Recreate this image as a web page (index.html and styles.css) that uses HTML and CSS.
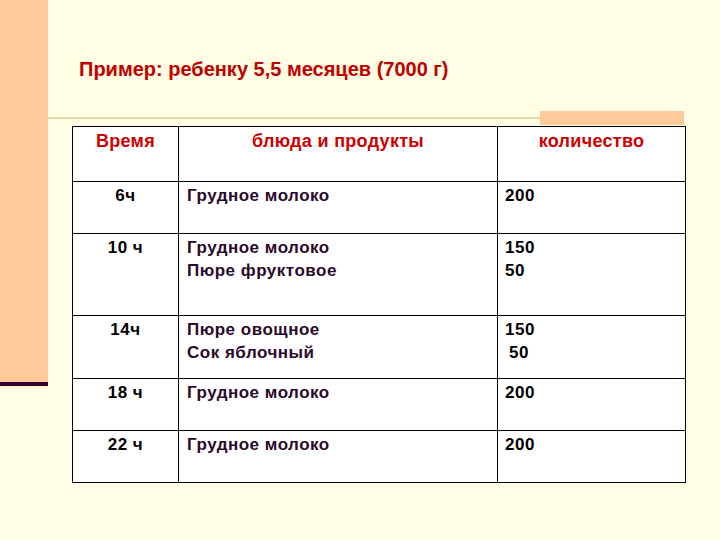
FILE: index.html
```html
<!DOCTYPE html>
<html lang="ru">
<head>
<meta charset="utf-8">
<title>Пример</title>
<link rel="stylesheet" href="styles.css">
</head>
<body>
<div class="page">
  <div class="side">
    <div class="side-fill"></div>
    <div class="side-bar"></div>
    <div class="side-line"></div>
  </div>
  <div class="main">
    <h1 class="title">Пример: ребенку 5,5 месяцев (7000 г)</h1>
    <div class="rule">
      <div class="rule-line"></div>
      <div class="rule-block"></div>
    </div>
    <table class="menu">
      <colgroup>
        <col class="c-time">
        <col class="c-food">
        <col class="c-qty">
      </colgroup>
      <tr class="r-head">
        <th>Время</th>
        <th>блюда и продукты</th>
        <th>количество</th>
      </tr>
      <tr class="r-52">
        <td class="time">6ч</td>
        <td class="food">Грудное молоко</td>
        <td class="qty">200</td>
      </tr>
      <tr class="r-82">
        <td class="time">10 ч</td>
        <td class="food">Грудное молоко<br>Пюре фруктовое</td>
        <td class="qty">150<br>50</td>
      </tr>
      <tr class="r-63">
        <td class="time">14ч</td>
        <td class="food">Пюре овощное<br>Сок яблочный</td>
        <td class="qty">150<br><span class="indent">50</span></td>
      </tr>
      <tr class="r-52">
        <td class="time">18 ч</td>
        <td class="food">Грудное молоко</td>
        <td class="qty">200</td>
      </tr>
      <tr class="r-52">
        <td class="time">22 ч</td>
        <td class="food">Грудное молоко</td>
        <td class="qty">200</td>
      </tr>
    </table>
  </div>
</div>
</body>
</html>
```

FILE: styles.css
```css
html, body {
  margin: 0;
  padding: 0;
  background: #FFFDE3;
}
.page {
  width: 720px;
  height: 540px;
  display: flex;
  background: #FFFDE3;
  font-family: "Liberation Sans", Arial, sans-serif;
  overflow: hidden;
}
.side {
  width: 48px;
  flex: none;
  display: flex;
  flex-direction: column;
}
.side-fill {
  height: 382px;
  background: #FFCC99;
}
.side-bar {
  height: 4px;
  background: #330033;
}
.side-line {
  height: 2px;
  background: #FFF4D0;
}
.main {
  flex: 1;
  display: flex;
  flex-direction: column;
}
.title {
  margin: 0;
  padding: 57px 0 0 31px;
  height: 111px;
  box-sizing: border-box;
  font-size: 20px;
  line-height: 24px;
  font-weight: bold;
  color: #C00000;
  flex: none;
}
.rule {
  display: flex;
  align-items: center;
  height: 14px;
  flex: none;
}
.rule-line {
  width: 492px;
  height: 2px;
  background: #E6D6A8;
}
.rule-block {
  width: 144px;
  height: 14px;
  background: #FFCC99;
}
.menu {
  margin: 1px 0 0 24px;
  border-collapse: collapse;
  table-layout: fixed;
  width: 613px;
  background: #FFFFFF;
  font-size: 17px;
  line-height: 23px;
  font-weight: bold;
  letter-spacing: 0.5px;
}
.c-time { width: 106px; }
.c-food { width: 319px; }
.c-qty { width: 188px; }
.menu th, .menu td {
  border: 1px solid #000000;
  vertical-align: top;
  padding: 2px 8px 0 8px;
}
.menu th {
  font-size: 18px;
  font-weight: bold;
  color: #CC0000;
  padding-top: 3px;
  letter-spacing: 0.3px;
  text-align: center;
}
.r-head { height: 55px; }
.r-52 { height: 52px; }
.r-82 { height: 82px; }
.r-63 { height: 63px; }
.time {
  text-align: center;
  color: #000000;
}
.food {
  color: #2A0A2A;
}
.menu td.qty {
  color: #000000;
  padding-left: 7px;
}
.indent {
  padding-left: 4px;
}
```
